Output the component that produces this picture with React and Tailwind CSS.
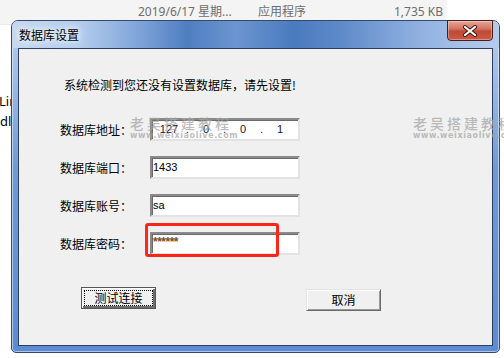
export default function App() {
  const rows = [
    { label: '数据库地址：', kind: 'ip' },
    { label: '数据库端口：', value: '1433' },
    { label: '数据库账号：', value: 'sa' },
    { label: '数据库密码：', value: '******', pass: true },
  ]

  return (
    <div className="relative w-[504px] h-[358px] overflow-hidden bg-white font-['Noto_Sans_CJK_SC',sans-serif] text-[12px] text-black">
      {/* explorer list row behind the dialog */}
      <div className="flex items-center h-[25px] w-[447px] bg-[#f4f4f4] border-b border-[#ececec] text-[#6d6d6d] font-['Noto_Sans','Noto_Sans_CJK_SC',sans-serif]">
        <span className="ml-[138px] w-[120px]">2019/6/17 星期...</span>
        <span className="w-[100px]">应用程序</span>
        <span className="ml-auto mr-[4px]">1,735 KB</span>
      </div>
      <div className="pl-0 pt-[66px] leading-[20px] font-['Noto_Sans',sans-serif] text-[13px]">
        <div className="-ml-[1px]">Lin</div>
        <div>dll</div>
      </div>

      {/* dialog window */}
      <div className="absolute left-[11px] top-[20px] w-[489px] h-[333px] flex flex-col rounded-t-[7px] rounded-b-[5px] border border-[#34496b] bg-[linear-gradient(180deg,#bcd1ee_0%,#9cbbe6_18%,#6f9ad6_45%,#5b8bd1_100%)] shadow-[inset_0_0_0_1px_rgba(255,255,255,0.5)]">
        <div className="relative h-[27px] shrink-0 flex items-center pl-[7px] rounded-t-[6px] bg-[linear-gradient(90deg,#c6d8f0_0%,#b4cced_14%,#7fa4da_26%,#4f7ec1_36%,#6b95d0_46%,#4a7abf_58%,#5f8bc9_68%,#86a9dc_80%,#a6c1e8_92%,#b4cbec_100%)]">
          <span className="text-[12px] leading-none text-black [text-shadow:0_0_6px_#ffffff,0_0_10px_#ffffff]">数据库设置</span>
          <div className="absolute right-[6px] top-[-1px] w-[46px] h-[21px] flex items-center justify-center rounded-b-[4px] border border-[#4a1c16] bg-[linear-gradient(180deg,#e8a596_0%,#d27563_40%,#c04a36_55%,#c95a44_100%)] shadow-[inset_0_0_0_1px_rgba(255,255,255,0.35)]">
            <svg width="16" height="12" viewBox="0 0 16 12">
              <path d="M3 2 L13 10 M13 2 L3 10" stroke="#3a1510" strokeWidth="4" strokeLinecap="round" />
              <path d="M3 2 L13 10 M13 2 L3 10" stroke="#ffffff" strokeWidth="2.2" strokeLinecap="round" />
            </svg>
          </div>
        </div>

        <div className="flex-1 mx-[6px] mb-[6px] border border-[#2c3f60] bg-[#f0f0f0] flex flex-col">
          <div className="mt-[28px] pl-[45px] leading-[16px]">系统检测到您还没有设置数据库，请先设置!</div>

          <div className="mt-[25px] flex flex-col gap-[15px]">
            {rows.map((r) => (
              <div key={r.label} className="flex items-center h-[23px]">
                <span className="w-[90px] pl-[41px] box-content shrink-0 text-[12px] leading-none">{r.label}</span>
                <div className="w-[150px] h-[23px] flex items-center border-2 border-t-[#8a8a8a] border-l-[#8a8a8a] border-r-[#e3e3e3] border-b-[#e3e3e3] bg-white shadow-[inset_1px_1px_0_#6a6a6a] font-['Liberation_Sans',sans-serif] text-[11px]">
                  {r.kind === 'ip' ? (
                    <div className="flex items-center text-[#141438]">
                      <span className="w-[34px] text-center">127</span>
                      <span className="w-[3px] text-center">.</span>
                      <span className="w-[34px] text-center">0</span>
                      <span className="w-[3px] text-center">.</span>
                      <span className="w-[34px] text-center">0</span>
                      <span className="w-[3px] text-center">.</span>
                      <span className="w-[34px] text-center">1</span>
                    </div>
                  ) : (
                    <span className={r.pass ? 'pl-[1px] -mt-[3px] text-[#7a4e1c] font-bold text-[12px] tracking-[-0.5px]' : 'pl-[1px]'}>{r.value}</span>
                  )}
                </div>
              </div>
            ))}
          </div>

          <div className="mt-[32px] pl-[62px] flex items-start">
            <button className="w-[75px] h-[22px] p-[2px] border border-[#555555] bg-[#f0f0f0] shadow-[inset_1px_1px_0_#ffffff,inset_-2px_-2px_0_#6e6e6e]">
              <span className="flex items-center justify-center w-full h-full border border-dotted border-black text-[12px] leading-none">测试连接</span>
            </button>
            <button className="ml-[150px] mt-[2px] w-[75px] h-[22px] flex items-center justify-center border border-t-[#e3e3e3] border-l-[#e3e3e3] border-r-[#6a6a6a] border-b-[#6a6a6a] bg-[#f0f0f0] shadow-[inset_1px_1px_0_#ffffff,inset_-1px_-1px_0_#9a9a9a] text-[12px] leading-none">
              取消
            </button>
          </div>
        </div>
      </div>

      {/* red annotation box */}
      <div className="absolute left-[145px] top-[223px] w-[134px] h-[34px] border-[3px] border-[#ff2618] rounded-[3px]" />

      {/* watermarks */}
      {[130, 413].map((x) => (
        <div key={x} className="absolute top-[115px] pointer-events-none" style={{ left: x }}>
          <div className="text-[14px] leading-[16px] tracking-[3px] text-[#a6a6a6]/75 font-medium">老吴搭建教程</div>
          <div className="font-['DejaVu_Sans',sans-serif] text-[8px] leading-[9px] tracking-[0.6px] font-bold text-[#a0a0a0]/70">www.weixiaolive.com</div>
        </div>
      ))}
    </div>
  )
}
